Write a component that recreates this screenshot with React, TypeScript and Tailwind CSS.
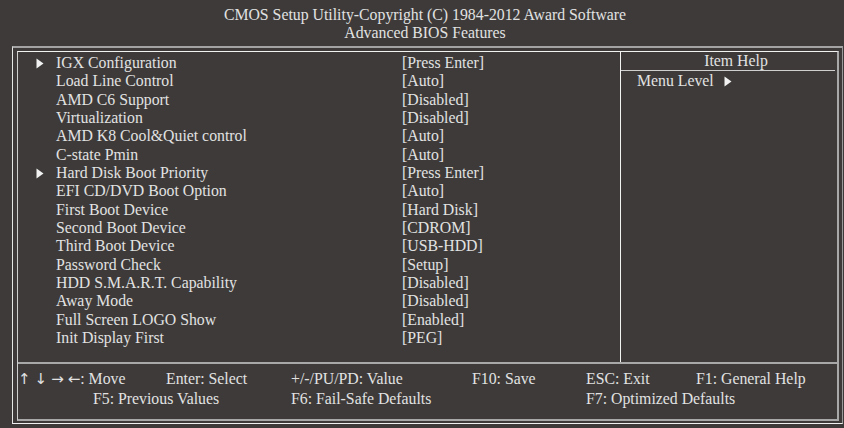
const items: { label: string; value: string; sub?: boolean }[] = [
  { label: 'IGX Configuration', value: '[Press Enter]', sub: true },
  { label: 'Load Line Control', value: '[Auto]' },
  { label: 'AMD C6 Support', value: '[Disabled]' },
  { label: 'Virtualization', value: '[Disabled]' },
  { label: 'AMD K8 Cool&Quiet control', value: '[Auto]' },
  { label: 'C-state Pmin', value: '[Auto]' },
  { label: 'Hard Disk Boot Priority', value: '[Press Enter]', sub: true },
  { label: 'EFI CD/DVD Boot Option', value: '[Auto]' },
  { label: 'First Boot Device', value: '[Hard Disk]' },
  { label: 'Second Boot Device', value: '[CDROM]' },
  { label: 'Third Boot Device', value: '[USB-HDD]' },
  { label: 'Password Check', value: '[Setup]' },
  { label: 'HDD S.M.A.R.T. Capability', value: '[Disabled]' },
  { label: 'Away Mode', value: '[Disabled]' },
  { label: 'Full Screen LOGO Show', value: '[Enabled]' },
  { label: 'Init Display First', value: '[PEG]' },
];

function Tri() {
  return (
    <svg width="8" height="11" viewBox="0 0 8 11" className="block">
      <path d="M0.5 0.5 L7.5 5.5 L0.5 10.5 Z" fill="#f2f2f2" />
    </svg>
  );
}

export default function App() {
  return (
    <div
      className="w-[844px] h-[428px] overflow-hidden bg-[#3d3a39] text-[#e2e2e2] text-[15.8px]"
      style={{ fontFamily: '"Liberation Serif", "Times New Roman", serif' }}
    >
      {/* header */}
      <div className="pt-[6px] pl-[6px] text-center leading-[18px]">
        <div>CMOS Setup Utility-Copyright (C) 1984-2012 Award Software</div>
        <div>Advanced BIOS Features</div>
      </div>

      {/* outer frame */}
      <div className="mt-[4px] ml-[12px] w-[831px] h-[378px] border-t-2 border-t-[#a3a3a3] border-l border-l-[#e6e6e6] border-b border-b-[#f0f0f0] border-r border-r-[#9a9a9a] pt-[3px] pl-[4px]">
        {/* inner frame */}
        <div className="w-[822px] h-[370px] flex flex-col border-t border-t-[#f2f2f2] border-l border-l-[#cfcfcf] border-r-2 border-r-[#a8a8a8] border-b-2 border-b-[#a8a8a8]">
          <div className="flex h-[310px]">
            {/* items */}
            <div className="w-[602px] pt-[2px]">
              {items.map((it) => (
                <div key={it.label} className="flex h-[18.33px] items-center leading-[18px]">
                  <div className="w-[38px] pl-[18px]">{it.sub && <Tri />}</div>
                  <div className="w-[346px] whitespace-nowrap">{it.label}</div>
                  <div className="whitespace-nowrap">{it.value}</div>
                </div>
              ))}
            </div>
            {/* help */}
            <div className="flex-1 border-l border-l-[#f2f2f2]">
              <div className="h-[18px] leading-[18px] text-center pl-[14px]">Item Help</div>
              <div className="mr-[2px] h-px bg-[#cfcfcf]" />
              <div className="flex items-center gap-[10px] pl-[16px] pt-[1px] leading-[18px]">
                <span>Menu Level</span>
                <Tri />
              </div>
            </div>
          </div>

          {/* footer */}
          <div className="h-[2px] bg-[#a8a8a8]" />
          <div className="pt-[5px] leading-[19px] whitespace-nowrap">
            <div className="flex">
              <span className="w-[148px]">
                <span
                  className="text-[15px] tracking-[4px]"
                  style={{ fontFamily: '"DejaVu Sans", sans-serif' }}
                >
                  ↑↓→←
                </span>
                <span className="-ml-[4px]">: Move</span>
              </span>
              <span className="w-[125px]">Enter: Select</span>
              <span className="w-[181px]">+/-/PU/PD: Value</span>
              <span className="w-[114px]">F10: Save</span>
              <span className="w-[110px]">ESC: Exit</span>
              <span>F1: General Help</span>
            </div>
            <div className="flex">
              <span className="w-[75px]" />
              <span className="w-[198px]">F5: Previous Values</span>
              <span className="w-[295px]">F6: Fail-Safe Defaults</span>
              <span>F7: Optimized Defaults</span>
            </div>
          </div>
        </div>
      </div>
    </div>
  );
}
